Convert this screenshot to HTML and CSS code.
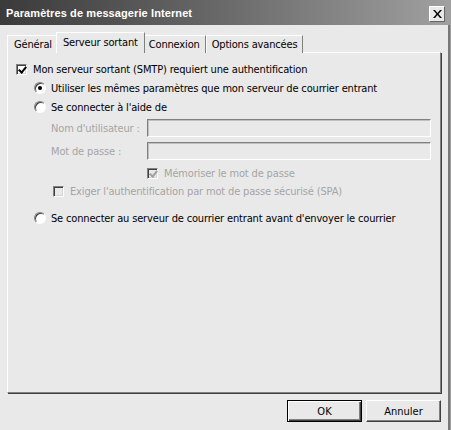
FILE: index.html
```html
<!DOCTYPE html>
<html lang="fr">
<head>
<meta charset="utf-8">
<title>Paramètres de messagerie Internet</title>
<link rel="stylesheet" href="styles.css">
</head>
<body>
<div class="window">
  <div class="titlebar">
    <span class="title">Paramètres de messagerie Internet</span>
    <button class="close" aria-label="Fermer">
      <svg width="9" height="8" viewBox="0 0 9 8"><path d="M0 0h2l2.5 3 2.5-3h2l-3.5 4 3.5 4h-2l-2.5-3-2.5 3h-2l3.5-4z" fill="#000"/></svg>
    </button>
  </div>
  <div class="content">
    <div class="tabs">
      <div class="tab first">Général</div>
      <div class="tab active">Serveur sortant</div>
      <div class="tab">Connexion</div>
      <div class="tab">Options avancées</div>
    </div>
    <div class="panel">
      <label class="row r1"><span class="cb checked"></span>Mon serveur sortant (SMTP) requiert une authentification</label>
      <label class="row r2"><span class="rb on"></span>Utiliser les mêmes paramètres que mon serveur de courrier entrant</label>
      <label class="row r3"><span class="rb"></span>Se connecter à l'aide de</label>
      <div class="field f1"><span class="flabel">Nom d'utilisateur :</span><span class="input"></span></div>
      <div class="field f2"><span class="flabel">Mot de passe :</span><span class="input"></span></div>
      <label class="row dis r6"><span class="cb checked disabled"></span>Mémoriser le mot de passe</label>
      <label class="row dis r7"><span class="cb disabled"></span>Exiger l'authentification par mot de passe sécurisé (SPA)</label>
      <label class="row r8"><span class="rb"></span>Se connecter au serveur de courrier entrant avant d'envoyer le courrier</label>
    </div>
    <div class="buttons">
      <button class="btn default">OK</button>
      <button class="btn">Annuler</button>
    </div>
  </div>
</div>
</body>
</html>
```
FILE: styles.css
```css
* { box-sizing: border-box; }
html, body { margin: 0; padding: 0; }
body {
  width: 451px;
  height: 430px;
  overflow: hidden;
  font-family: "DejaVu Sans Condensed", "Liberation Sans", sans-serif;
  font-size: 11px;
  letter-spacing: -0.16px;
  color: #000;
}
.window {
  width: 451px;
  height: 430px;
  background: #e9e9e9;
  border-right: 1px solid #a0a0a0;
  box-shadow: inset -2px 0 0 #777;
  display: flex;
  flex-direction: column;
}
.titlebar {
  height: 25px;
  background: linear-gradient(to right, #3a3a3a, #6a6a6a 50%, #a0a0a0);
  display: flex;
  align-items: center;
  justify-content: space-between;
  padding: 0 5px 0 6px;
}
.title {
  color: #fff;
  font-family: "Liberation Sans", sans-serif;
  font-weight: bold;
  font-size: 11px;
  letter-spacing: 0.1px;
}
.close {
  width: 16px;
  height: 16px;
  margin-top: 2px;
  padding: 0;
  background: #e9e9e9;
  border: 1px solid;
  border-color: #fff #666 #666 #fff;
  display: flex;
  align-items: center;
  justify-content: center;
}
.content {
  padding: 8px 9px 0 7px;
  flex: 1;
  display: flex;
  flex-direction: column;
}
.tabs {
  display: flex;
  align-items: flex-end;
  height: 20px;
  position: relative;
  z-index: 1;
  margin-bottom: -1px;
}
.tab {
  height: 18px;
  padding: 2px 5px 0 5px;
  border: 1px solid;
  border-color: #fff #808080 transparent #fff;
  border-bottom: 0;
  background: #e9e9e9;
  white-space: nowrap;
}
.tab.first { padding-left: 6px; }
.tab.active {
  height: 21px;
  padding: 3px 6px 0 6px;
  margin: 0 -2px;
  position: relative;
  z-index: 2;
}
.panel {
  height: 341px;
  border: 1px solid;
  border-color: #fff #808080 #808080 #fff;
  box-shadow: 1px 1px 0 #404040;
  padding: 9px 0 0 8px;
  display: flex;
  flex-direction: column;
}
.row {
  display: flex;
  align-items: center;
  height: 14px;
  white-space: nowrap;
}
.cb {
  width: 11px;
  height: 11px;
  border: 1px solid;
  border-color: #808080 #fff #fff #808080;
  box-shadow: inset 1px 1px 0 #404040, inset -1px -1px 0 #d4d4d4;
  background: #fff;
  margin-right: 6px;
  position: relative;
  flex: none;
}
.cb.checked::after {
  content: "";
  position: absolute;
  top: 0;
  left: 3px;
  width: 3px;
  height: 6px;
  border: solid #000;
  border-width: 0 2px 2px 0;
  transform: rotate(40deg);
}
.cb.disabled { background: #e9e9e9; }
.cb.disabled.checked::after { border-color: #a0a0a0; }
.rb {
  width: 12px;
  height: 12px;
  border-radius: 50%;
  background: #fff;
  border: 1px solid;
  border-color: #808080 #fff #fff #808080;
  box-shadow: inset 1px 1px 0 #404040;
  margin-right: 5px;
  position: relative;
  flex: none;
}
.rb.on::after {
  content: "";
  position: absolute;
  left: 3px;
  top: 3px;
  width: 4px;
  height: 4px;
  border-radius: 50%;
  background: #000;
}
.r2 { margin: 5px 0 0 18px; }
.r3 { margin: 5px 0 0 18px; }
.field {
  display: flex;
  align-items: center;
  margin: 5px 0 0 35px;
  height: 18px;
  color: #a5a5a5;
}
.flabel { width: 96px; }
.input {
  width: 284px;
  height: 18px;
  border: 1px solid;
  border-color: #808080 #fff #fff #808080;
  box-shadow: inset 1px 1px 0 #c0c0c0;
}
.dis { color: #a5a5a5; }
.r6 { margin: 6px 0 0 131px; }
.r7 { margin: 4px 0 0 37px; }
.r8 { margin: 13px 0 0 18px; }
.buttons {
  display: flex;
  justify-content: flex-end;
  gap: 4px;
  margin-top: 7px;
}
.btn {
  width: 75px;
  height: 22px;
  font: inherit;
  color: #000;
  background: #e9e9e9;
  border: 1px solid;
  border-color: #fff #404040 #404040 #fff;
  box-shadow: inset -1px -1px 0 #808080;
  padding: 0;
}
.btn.default {
  border-color: #000;
  box-shadow: inset 1px 1px 0 #fff, inset -1px -1px 0 #404040, inset -2px -2px 0 #808080;
}
```
